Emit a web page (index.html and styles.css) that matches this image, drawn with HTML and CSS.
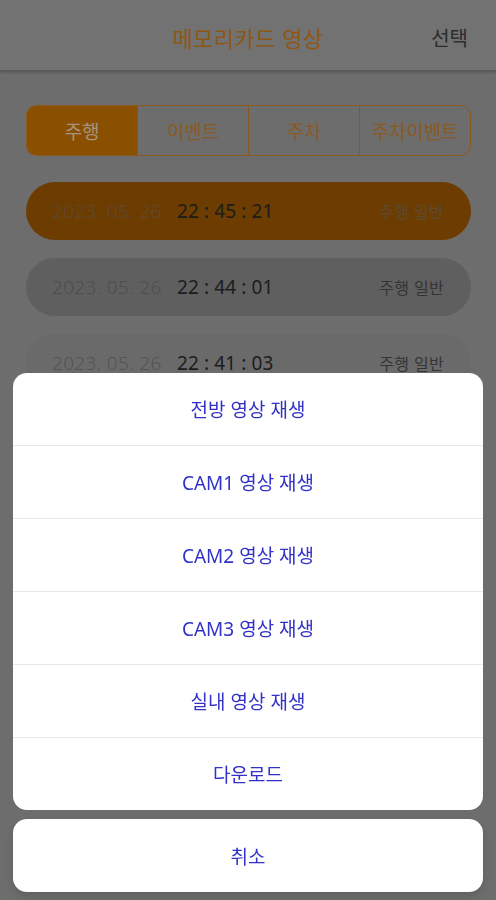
FILE: index.html
```html
<!DOCTYPE html>
<html lang="ko">
<head>
<meta charset="utf-8">
<title>메모리카드 영상</title>
<link rel="stylesheet" href="styles.css">
</head>
<body>
<div class="screen">
  <header class="topbar">
    <span class="spacer"></span>
    <h1 class="title">메모리카드 영상</h1>
    <span class="select">선택</span>
  </header>

  <nav class="tabs">
    <span class="tab active">주행</span>
    <span class="tab">이벤트</span>
    <span class="tab">주차</span>
    <span class="tab">주차이벤트</span>
  </nav>

  <ul class="list">
    <li class="row selected"><span class="date">2023. 05. 26</span><span class="time">22 : 45 : 21</span><span class="kind">주행 일반</span></li>
    <li class="row pressed"><span class="date">2023. 05. 26</span><span class="time">22 : 44 : 01</span><span class="kind">주행 일반</span></li>
    <li class="row"><span class="date">2023. 05. 26</span><span class="time">22 : 41 : 03</span><span class="kind">주행 일반</span></li>
  </ul>

  <div class="backdrop">
    <div class="sheet">
      <div class="action">전방 영상 재생</div>
      <div class="action">CAM1 영상 재생</div>
      <div class="action">CAM2 영상 재생</div>
      <div class="action">CAM3 영상 재생</div>
      <div class="action">실내 영상 재생</div>
      <div class="action">다운로드</div>
    </div>
    <div class="cancel">취소</div>
  </div>
</div>
</body>
</html>
```

FILE: styles.css
```css
* {
  box-sizing: border-box;
}

html, body {
  margin: 0;
  padding: 0;
}

body {
  width: 496px;
  height: 900px;
  overflow: hidden;
  background: #6d6d6d;
  font-family: "Noto Sans", "Noto Sans CJK KR", sans-serif;
}

.screen {
  width: 496px;
  height: 900px;
  overflow: hidden;
  background: #6d6d6d;
}

.topbar {
  height: 72px;
  display: grid;
  grid-template-columns: 1fr auto 1fr;
  align-items: center;
  padding: 4px 28px 0 28px;
  background: #727272;
  border-bottom: 2px solid #5b5b5b;
  box-shadow: 0 1px 2px rgba(0, 0, 0, 0.15);
}

.title {
  margin: 0;
  font-size: 22px;
  font-weight: 400;
  color: #8d5716;
  letter-spacing: 0.4px;
  font-family: "Noto Sans CJK KR", sans-serif;
}

.select {
  justify-self: end;
  font-size: 20px;
  color: #2c2c2c;
  font-family: "Noto Sans CJK KR", sans-serif;
}

.tabs {
  display: flex;
  height: 51px;
  margin: 33px 25px 0 26px;
  border: 1px solid #8a5a22;
  border-radius: 10px;
  overflow: hidden;
}

.tab {
  flex: 1;
  display: flex;
  align-items: center;
  justify-content: center;
  font-size: 19px;
  color: #8a5a22;
  font-family: "Noto Sans CJK KR", sans-serif;
  border-left: 1px solid #84582a;
  letter-spacing: -0.2px;
}

.tab:first-child {
  border-left: none;
}

.tab.active {
  background: #8b4f00;
  color: #a4937f;
}

.list {
  list-style: none;
  margin: 26px 25px 0 26px;
  padding: 0;
  display: flex;
  flex-direction: column;
  gap: 18px;
}

.row {
  height: 58px;
  border-radius: 29px;
  display: flex;
  align-items: center;
  padding: 0 27px 0 26px;
  background: #6a6a6a;
  flex-shrink: 0;
}

.date {
  font-size: 19px;
  color: #545454;
  width: 125px;
  font-weight: 300;
  letter-spacing: 0.3px;
}

.time {
  font-size: 19px;
  color: #1c1c1c;
  letter-spacing: 0.1px;
}

.kind {
  margin-left: auto;
  font-size: 16px;
  color: #343434;
  letter-spacing: 0.3px;
  font-family: "Noto Sans CJK KR", sans-serif;
}

.row.selected {
  background: #6c3c00;
}

.row.selected .date,
.row.selected .kind {
  color: #5c4a36;
}

.row.pressed {
  background: #5f5f5f;
}

.row.pressed .date {
  color: #4e4e4e;
}

.backdrop {
  position: fixed;
  inset: 0;
  display: flex;
  flex-direction: column;
  justify-content: flex-end;
  gap: 9px;
  padding: 0 13px 8px 13px;
}

.sheet {
  background: #ffffff;
  border-radius: 14px;
  overflow: hidden;
}

.action,
.cancel {
  height: 72px;
  display: flex;
  align-items: center;
  justify-content: center;
  font-size: 19px;
  color: #3232c8;
  font-family: "Noto Sans", "Noto Sans CJK KR", sans-serif;
}

.action + .action {
  height: 73px;
  border-top: 1px solid #e8e8e8;
}

.cancel {
  height: 73px;
  background: #ffffff;
  border-radius: 14px;
  box-shadow: 0 4px 8px rgba(0, 0, 0, 0.12);
}
```
